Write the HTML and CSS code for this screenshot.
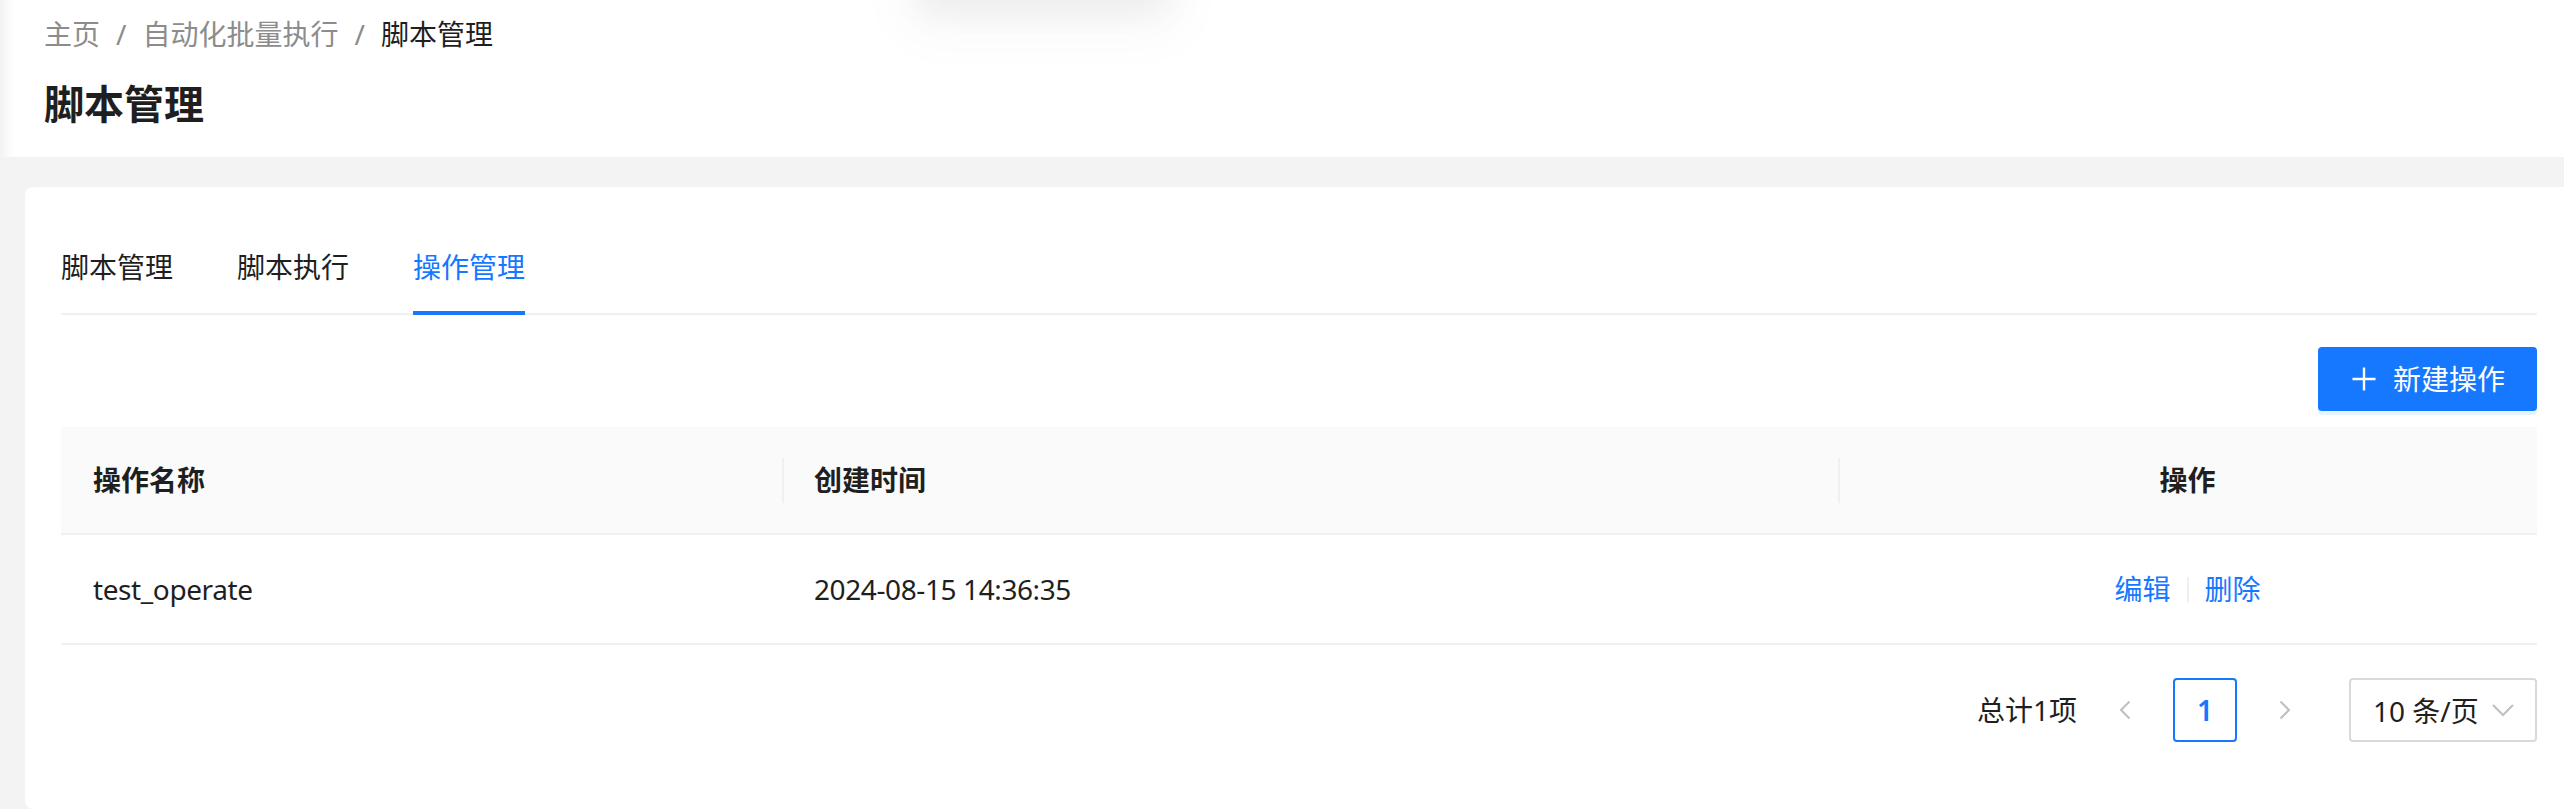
FILE: index.html
```html
<!DOCTYPE html>
<html lang="zh-CN">
<head>
<meta charset="utf-8">
<title>脚本管理</title>
<link rel="stylesheet" href="styles.css">
</head>
<body>
<div class="top-shadow"></div>
<header class="page-header">
  <nav class="breadcrumb">
    <span class="crumb">主页</span><span class="sep">/</span>
    <span class="crumb">自动化批量执行</span><span class="sep">/</span>
    <span class="crumb current">脚本管理</span>
  </nav>
  <h1 class="page-title">脚本管理</h1>
</header>
<main class="content">
  <section class="card">
    <div class="tabs-nav">
      <div class="tab">脚本管理</div>
      <div class="tab">脚本执行</div>
      <div class="tab active">操作管理</div>
    </div>
    <div class="toolbar">
      <button class="btn-primary">
        <svg class="plus" viewBox="0 0 28 28" width="28" height="28"><path d="M14 2.5v23M2.5 14h23" stroke="#fff" stroke-width="2.4" fill="none"/></svg>
        <span>新建操作</span>
      </button>
    </div>
    <table class="table">
      <colgroup><col class="c1"><col class="c2"><col class="c3"></colgroup>
      <thead>
        <tr><th>操作名称</th><th class="sepcol">创建时间</th><th class="sepcol center">操作</th></tr>
      </thead>
      <tbody>
        <tr>
          <td class="latin">test_operate</td>
          <td class="latin">2024-08-15 14:36:35</td>
          <td class="center"><span class="link">编辑</span><span class="vdiv"></span><span class="link">删除</span></td>
        </tr>
      </tbody>
    </table>
    <div class="pagination">
      <span class="total">总计1项</span>
      <span class="pg-btn"><svg viewBox="0 0 24 24" width="24" height="24"><polyline points="16.5,3.5 8,12 16.5,20.5" fill="none" stroke="#bfbfbf" stroke-width="2"/></svg></span>
      <span class="pg-item active">1</span>
      <span class="pg-btn"><svg viewBox="0 0 24 24" width="24" height="24"><polyline points="7.5,3.5 16,12 7.5,20.5" fill="none" stroke="#bfbfbf" stroke-width="2"/></svg></span>
      <span class="pg-select"><span>10 条/页</span><svg viewBox="0 0 24 24" width="24" height="24"><polyline points="2,7 12,17 22,7" fill="none" stroke="#bfbfbf" stroke-width="2"/></svg></span>
    </div>
  </section>
</main>
</body>
</html>
```
FILE: styles.css
```css
html, body {
  margin: 0;
  padding: 0;
}
body {
  background: #f3f3f3;
  overflow: hidden;
  font-family: "Noto Sans", "Noto Sans CJK SC", sans-serif;
  font-size: 28px;
  color: #1f1f1f;
  position: relative;
  height: 809px;
}
.top-shadow {
  position: absolute;
  top: -40px;
  left: 915px;
  width: 255px;
  height: 40px;
  border-radius: 12px;
  background: #fff;
  box-shadow: 0 12px 32px 0 rgba(0,0,0,0.05), 0 18px 56px 16px rgba(0,0,0,0.03);
  z-index: 2;
}
.page-header {
  background: linear-gradient(90deg, #f3f3f3 0, #fff 14px);
  padding: 12px 0 21px 44px;
  position: relative;
  z-index: 1;
}
.breadcrumb {
  display: flex;
  align-items: center;
  line-height: 44px;
  color: #8c8c8c;
}
.breadcrumb .sep {
  margin: 0 16px;
}
.breadcrumb .current {
  color: #1f1f1f;
}
.page-title {
  margin: 16px 0 0;
  font-size: 40px;
  line-height: 64px;
  font-weight: 700;
  color: #1f1f1f;
}
.content {
  padding: 30px 0 0 25px;
}
.card {
  background: #fff;
  border-radius: 8px;
  width: 2476px;
  padding: 34px 36px 67px;
}
.tabs-nav {
  display: flex;
  gap: 64px;
  border-bottom: 2px solid #f0f0f0;
}
.tab {
  position: relative;
  padding: 24px 0;
  line-height: 44px;
}
.tab.active {
  color: #1677ff;
}
.tab.active::after {
  content: "";
  position: absolute;
  left: 0;
  right: 0;
  bottom: -2px;
  height: 4px;
  background: #1677ff;
}
.toolbar {
  display: flex;
  justify-content: flex-end;
  margin-top: 32px;
}
.btn-primary {
  display: flex;
  align-items: center;
  gap: 15px;
  height: 64px;
  padding: 0 32px;
  border: none;
  border-radius: 4px;
  background: #1677ff;
  color: #fff;
  font-family: inherit;
  font-size: 28px;
  line-height: 44px;
  box-shadow: 0 4px 0 rgba(5,145,255,0.1);
}
.table {
  margin-top: 16px;
  width: 2476px;
  border-collapse: collapse;
  table-layout: fixed;
}
.c1 { width: 721px; }
.c2 { width: 1056px; }
.c3 { width: 699px; }
.table th {
  background: #fafafa;
  padding: 31px 32px;
  line-height: 44px;
  font-weight: 700;
  text-align: left;
  border-bottom: 2px solid #f0f0f0;
  position: relative;
}
.table th.sepcol::before {
  content: "";
  position: absolute;
  left: 0;
  top: 50%;
  width: 2px;
  height: 45px;
  margin-top: -22px;
  background: #f0f0f0;
}
.table td {
  padding: 32px;
  line-height: 44px;
  border-bottom: 2px solid #f0f0f0;
}
.table td.latin {
  letter-spacing: -0.4px;
}
.table .center {
  text-align: center;
}
.link {
  color: #1677ff;
}
.vdiv {
  display: inline-block;
  width: 2px;
  height: 26px;
  margin: 0 16px;
  background: #f0f0f0;
  vertical-align: -3px;
}
.pagination {
  display: flex;
  justify-content: flex-end;
  align-items: center;
  margin-top: 33px;
  height: 64px;
}
.total {
  margin-right: 16px;
  line-height: 64px;
}
.pg-btn {
  width: 64px;
  height: 64px;
  display: flex;
  align-items: center;
  justify-content: center;
  margin-right: 16px;
}
.pg-item {
  box-sizing: border-box;
  width: 64px;
  height: 64px;
  display: flex;
  align-items: center;
  justify-content: center;
  margin-right: 16px;
  border: 2px solid #1677ff;
  border-radius: 4px;
  color: #1677ff;
  font-weight: 600;
}
.pg-select {
  box-sizing: border-box;
  margin-left: 16px;
  width: 188px;
  height: 64px;
  border: 2px solid #d9d9d9;
  border-radius: 4px;
  padding: 0 20px 0 22px;
  display: flex;
  align-items: center;
  justify-content: space-between;
}
```
